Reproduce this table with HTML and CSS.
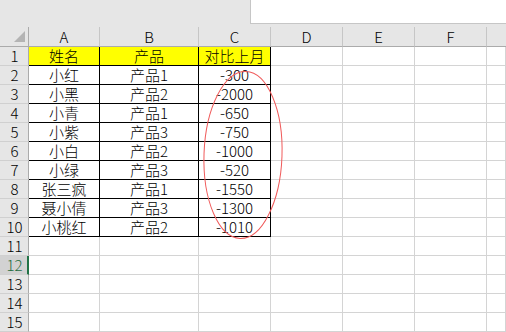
FILE: index.html
```html
<!DOCTYPE html>
<html lang="zh">
<head>
<meta charset="utf-8">
<link rel="stylesheet" href="styles.css">
</head>
<body>
<div class="app">
  <div class="topband">
    <div class="topspace"></div>
    <div class="formula"></div>
  </div>
  <div class="sheet">
    <div class="grid">
      <div class="corner"><span class="tri"></span></div>
      <div class="ch">A</div><div class="ch">B</div><div class="ch">C</div><div class="ch">D</div><div class="ch">E</div><div class="ch">F</div><div class="ch last"></div>

      <div class="rh">1</div><div class="c d y">姓名</div><div class="c d y">产品</div><div class="c d y">对比上月</div><div class="c"></div><div class="c"></div><div class="c"></div><div class="c"></div>
      <div class="rh">2</div><div class="c d">小红</div><div class="c d">产品1</div><div class="c d">-300</div><div class="c"></div><div class="c"></div><div class="c"></div><div class="c"></div>
      <div class="rh">3</div><div class="c d">小黑</div><div class="c d">产品2</div><div class="c d">-2000</div><div class="c"></div><div class="c"></div><div class="c"></div><div class="c"></div>
      <div class="rh">4</div><div class="c d">小青</div><div class="c d">产品1</div><div class="c d">-650</div><div class="c"></div><div class="c"></div><div class="c"></div><div class="c"></div>
      <div class="rh">5</div><div class="c d">小紫</div><div class="c d">产品3</div><div class="c d">-750</div><div class="c"></div><div class="c"></div><div class="c"></div><div class="c"></div>
      <div class="rh">6</div><div class="c d">小白</div><div class="c d">产品2</div><div class="c d">-1000</div><div class="c"></div><div class="c"></div><div class="c"></div><div class="c"></div>
      <div class="rh">7</div><div class="c d">小绿</div><div class="c d">产品3</div><div class="c d">-520</div><div class="c"></div><div class="c"></div><div class="c"></div><div class="c"></div>
      <div class="rh">8</div><div class="c d">张三疯</div><div class="c d">产品1</div><div class="c d">-1550</div><div class="c"></div><div class="c"></div><div class="c"></div><div class="c"></div>
      <div class="rh">9</div><div class="c d">聂小倩</div><div class="c d">产品3</div><div class="c d">-1300</div><div class="c"></div><div class="c"></div><div class="c"></div><div class="c"></div>
      <div class="rh">10</div><div class="c d">小桃红</div><div class="c d">产品2</div><div class="c d">-1010</div><div class="c"></div><div class="c"></div><div class="c"></div><div class="c"></div>
      <div class="rh">11</div><div class="c"></div><div class="c"></div><div class="c"></div><div class="c"></div><div class="c"></div><div class="c"></div><div class="c"></div>
      <div class="rh sel">12</div><div class="c"></div><div class="c"></div><div class="c"></div><div class="c"></div><div class="c"></div><div class="c"></div><div class="c"></div>
      <div class="rh">13</div><div class="c"></div><div class="c"></div><div class="c"></div><div class="c"></div><div class="c"></div><div class="c"></div><div class="c"></div>
      <div class="rh">14</div><div class="c"></div><div class="c"></div><div class="c"></div><div class="c"></div><div class="c"></div><div class="c"></div><div class="c"></div>
      <div class="rh">15</div><div class="c"></div><div class="c"></div><div class="c"></div><div class="c"></div><div class="c"></div><div class="c"></div><div class="c"></div>
    </div>
    <svg class="mark" width="506" height="332" viewBox="0 0 506 332">
      <ellipse cx="243" cy="161" rx="39" ry="83.5" transform="rotate(2 243 161)" fill="none" stroke="#f05a5a" stroke-width="1"/>
    </svg>
  </div>
</div>
</body>
</html>
```

FILE: styles.css
```css
* { box-sizing: border-box; }
html, body { margin: 0; padding: 0; }
body {
  width: 506px;
  height: 332px;
  overflow: hidden;
  background: #ffffff;
  font-family: "Noto Sans CJK SC", "Noto Sans", sans-serif;
  font-size: 15px;
  font-weight: 300;
  color: #000;
}
.app { display: flex; flex-direction: column; width: 506px; height: 332px; }
.topband {
  display: flex;
  height: 33px;
  background: #e6e6e6;
  align-items: flex-start;
}
.topspace { width: 250px; }
.formula {
  flex: 1;
  height: 24px;
  background: #ffffff;
  border-left: 1px solid #c6c6c6;
  border-bottom: 1px solid #c6c6c6;
}
.sheet { position: relative; flex: 1; }
.grid {
  display: grid;
  grid-template-columns: 29px 71px 99px 72px 72px 72px 72px 1fr;
  grid-template-rows: 20px repeat(15, 19px);
}
.corner {
  background: #e6e6e6;
  border-right: 1px solid #ababab;
  border-bottom: 1px solid #ababab;
  display: flex;
  justify-content: flex-end;
  align-items: flex-end;
  padding: 0 3px 4px 0;
}
.tri {
  width: 11px;
  height: 11px;
  background: #b4b4b4;
  clip-path: polygon(100% 0, 100% 100%, 0 100%);
}
.ch {
  background: #e6e6e6;
  border-bottom: 1px solid #ababab;
  border-right: 1px solid #c6c6c6;
  display: flex;
  align-items: center;
  justify-content: center;
  line-height: 18px;
  padding-top: 1px;
}
.ch.last { border-right: none; }
.rh {
  background: #e6e6e6;
  border-right: 1px solid #ababab;
  border-bottom: 1px solid #d0d0d0;
  display: flex;
  align-items: center;
  justify-content: center;
  line-height: 18px;
  padding-left: 1px;
}
.rh.sel {
  background: #d2d2d2;
  color: #1e6b40;
  border-right: 2px solid #217346;
  padding-left: 2px;
}
.c {
  border-right: 1px solid #d4d4d4;
  border-bottom: 1px solid #d4d4d4;
  display: flex;
  align-items: center;
  justify-content: center;
  line-height: 18px;
  white-space: nowrap;
}
.c.d {
  border-right-color: #000;
  border-bottom-color: #000;
}
.c.y { background: #ffff00; }
.mark {
  position: absolute;
  left: 0;
  top: -33px;
  pointer-events: none;
}
```
